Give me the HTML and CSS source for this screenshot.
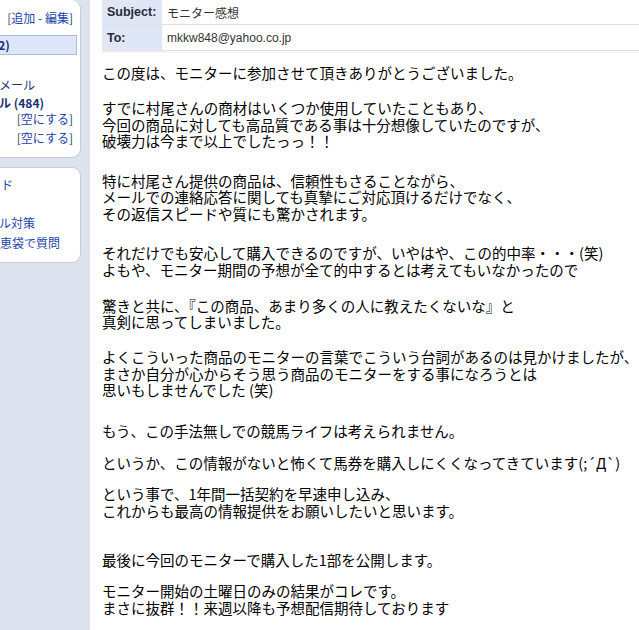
FILE: index.html
```html
<!DOCTYPE html>
<html lang="ja">
<head>
<meta charset="utf-8">
<link rel="stylesheet" href="styles.css">
</head>
<body>
<div class="page">
  <aside class="sidebar">
    <div class="panel panel-top">
      <div class="edit"><span class="br">[</span><a>追加</a> <span class="br">-</span> <a>編集</a><span class="br">]</span></div>
      <div class="current"><span class="cut">受信箱 (2)</span></div>
      <div class="item item-sent"><span class="cut">送信済みメール</span></div>
      <div class="item item-bold"><span class="cut">迷惑メール (484)</span></div>
      <div class="empty"><span class="br">[</span><a>空にする</a><span class="br">]</span></div>
      <div class="empty empty2"><span class="br">[</span><a>空にする</a><span class="br">]</span></div>
    </div>
    <div class="panel panel-help">
      <div class="link l1"><span class="cut2">ご利用ガイド</span></div>
      <div class="link l2"><span class="cut">迷惑メール対策</span></div>
      <div class="link l3"><span class="cut3">Yahoo!知恵袋で質問</span></div>
    </div>
  </aside>
  <main class="main">
    <div class="headers">
      <div class="hrow">
        <div class="hlabel">Subject:</div>
        <div class="hvalue jp">モニター感想</div>
      </div>
      <div class="hrow">
        <div class="hlabel">To:</div>
        <div class="hvalue">mkkw848@yahoo.co.jp</div>
      </div>
    </div>
    <div class="message">
      <p class="p">この度は、モニターに参加させて頂きありがとうございました。</p>
      <p class="p g18">すでに村尾さんの商材はいくつか使用していたこともあり、<br>今回の商品に対しても高品質である事は十分想像していたのですが、<br>破壊力は今まで以上でしたっっ！！</p>
      <p class="p g23">特に村尾さん提供の商品は、信頼性もさることながら、<br>メールでの連絡応答に関しても真摯にご対応頂けるだけでなく、<br>その返信スピードや質にも驚かされます。</p>
      <p class="p g23">それだけでも安心して購入できるのですが、いやはや、この的中率・・・(笑)<br>よもや、モニター期間の予想が全て的中するとは考えてもいなかったので</p>
      <p class="p g19">驚きと共に、『この商品、あまり多くの人に教えたくないな』と<br>真剣に思ってしまいました。</p>
      <p class="p g18">よくこういった商品のモニターの言葉でこういう台詞があるのは見かけましたが、<br>まさか自分が心からそう思う商品のモニターをする事になろうとは<br>思いもしませんでした (笑)</p>
      <p class="p g24">もう、この手法無しでの競馬ライフは考えられません。</p>
      <p class="p g15">というか、この情報がないと怖くて馬券を購入しにくくなってきています(;´Д`)</p>
      <p class="p g15">という事で、1年間一括契約を早速申し込み、<br>これからも最高の情報提供をお願いしたいと思います。</p>
      <p class="p g30">最後に今回のモニターで購入した1部を公開します。</p>
      <p class="p g15">モニター開始の土曜日のみの結果がコレです。<br>まさに抜群！！来週以降も予想配信期待しております</p>
    </div>
  </main>
</div>
</body>
</html>
```
FILE: styles.css
```css
html, body {
  margin: 0;
  padding: 0;
  background: #ffffff;
}
body {
  width: 639px;
  height: 630px;
  overflow: hidden;
}
.page {
  display: flex;
  height: 630px;
}
.sidebar {
  width: 90px;
  flex: 0 0 90px;
  background: #dde3ee;
  font-family: "Noto Sans CJK JP", sans-serif;
  font-size: 12px;
  color: #1a3272;
  overflow: hidden;
}
.panel {
  width: 81px;
  background: #ffffff;
  border-right: 1px solid #c3cbd8;
  border-bottom: 1px solid #c3cbd8;
  box-sizing: border-box;
  overflow: hidden;
  position: relative;
}
.panel-top {
  height: 158px;
  border-radius: 0 9px 9px 0;
  padding-top: 9px;
}
.panel-help {
  margin-top: 9px;
  height: 96px;
  border-top: 1px solid #c3cbd8;
  border-radius: 0 9px 9px 0;
  padding-top: 7px;
}
a {
  color: #1d3fa8;
}
.br {
  color: #333a55;
}
.edit {
  text-align: right;
  padding-right: 7px;
  line-height: 18px;
  white-space: nowrap;
}
.current {
  margin-top: 8px;
  width: 77px;
  height: 20px;
  box-sizing: border-box;
  background: #dde7f8;
  border: 1px solid #a8bbe0;
  border-left: none;
  font-weight: bold;
  line-height: 18px;
  white-space: nowrap;
  overflow: hidden;
}
.cut {
  display: inline-block;
  margin-left: -49px;
  white-space: nowrap;
}
.current .cut {
  margin-left: -45px;
}
.cut2 {
  display: inline-block;
  margin-left: -59px;
  white-space: nowrap;
}
.cut3 {
  display: inline-block;
  margin-left: -50px;
  white-space: nowrap;
}
.item {
  line-height: 18px;
  white-space: nowrap;
  overflow: hidden;
}
.item-sent {
  margin-top: 21px;
}
.item-bold {
  font-weight: bold;
}
.empty {
  text-align: right;
  padding-right: 7px;
  line-height: 18px;
  margin-top: -2px;
  white-space: nowrap;
}
.empty2 {
  margin-top: 1px;
}
.link {
  line-height: 20px;
  white-space: nowrap;
  overflow: hidden;
  color: #1d3fa8;
}
.l2 {
  margin-top: 18px;
}
.main {
  flex: 1;
  min-width: 0;
  padding-left: 12px;
  background: #ffffff;
}
.headers {
  font-family: "Liberation Sans", Arial, sans-serif;
  font-size: 12px;
  color: #222;
  box-shadow: 0 2px 0 #f4f4f4;
}
.hrow {
  display: flex;
  height: 25px;
  border-bottom: 1px solid #e1e1e1;
  box-sizing: border-box;
}
.hrow + .hrow {
  height: 26px;
}
.hlabel {
  width: 60px;
  flex: 0 0 60px;
  background: #dfe7f7;
  font-weight: bold;
  font-size: 12.5px;
  padding-left: 5px;
  box-sizing: border-box;
  display: flex;
  align-items: center;
  color: #2a2a3a;
}
.hvalue {
  padding-left: 5px;
  display: flex;
  align-items: center;
  color: #333;
}
.hvalue.jp {
  font-family: "Noto Sans CJK JP", sans-serif;
}
.message {
  font-family: "Noto Sans CJK JP", sans-serif;
  font-size: 14.5px;
  line-height: 16.5px;
  color: #000;
  padding-top: 14px;
  white-space: nowrap;
}
.p {
  margin: 0;
}
.g15 { margin-top: 15px; }
.g18 { margin-top: 18.5px; }
.g19 { margin-top: 19.5px; }
.g23 { margin-top: 23px; }
.g24 { margin-top: 24.5px; }
.g30 { margin-top: 32.5px; }
```
